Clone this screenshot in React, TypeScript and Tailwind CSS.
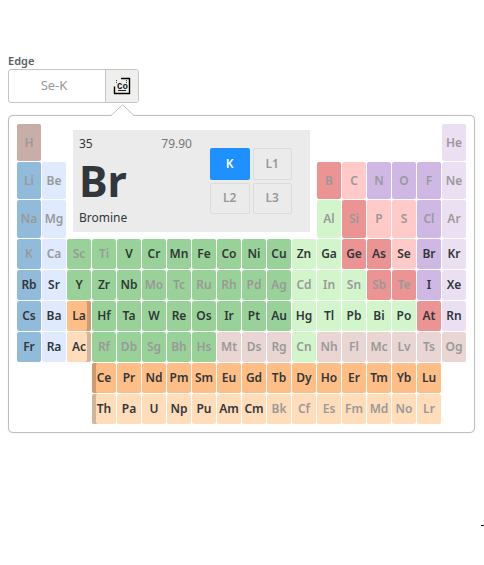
import { useState } from "react";

type Kind =
  | "hydrogen"
  | "alkali"
  | "alkaline"
  | "transition"
  | "post"
  | "metalloid"
  | "nonmetal"
  | "halogen"
  | "noble"
  | "lanthanide"
  | "actinide"
  | "unknown";

const fills: Record<Kind, string> = {
  hydrogen: "bg-[#c9aea7]",
  alkali: "bg-[#91bbda]",
  alkaline: "bg-[#dfeafe]",
  transition: "bg-[#99d298]",
  post: "bg-[#d2f5cb]",
  metalloid: "bg-[#ec9494]",
  nonmetal: "bg-[#ffcac8]",
  halogen: "bg-[#cfb8e4]",
  noble: "bg-[#ebe0f2]",
  lanthanide: "bg-[#ffbe86]",
  actinide: "bg-[#ffdcba]",
  unknown: "bg-[#e9d5d1]",
};

const codes: Record<string, Kind> = {
  h: "hydrogen",
  k: "alkali",
  e: "alkaline",
  t: "transition",
  p: "post",
  m: "metalloid",
  n: "nonmetal",
  x: "halogen",
  g: "noble",
  l: "lanthanide",
  a: "actinide",
  u: "unknown",
};

// Each entry is symbol:category, "*" marks an element without a reachable edge,
// and a leading number skips that many columns.
const rows = [
  "H:h* 16 He:g*",
  "Li:k* Be:e* 10 B:m* C:n* N:x* O:x* F:x* Ne:g*",
  "Na:k* Mg:e* 10 Al:p* Si:m* P:n* S:n* Cl:x* Ar:g*",
  "K:k* Ca:e* Sc:t* Ti:t* V:t Cr:t Mn:t Fe:t Co:t Ni:t Cu:t Zn:p Ga:p Ge:m As:m Se:n Br:x Kr:g",
  "Rb:k Sr:e Y:t Zr:t Nb:t Mo:t* Tc:t* Ru:t* Rh:t* Pd:t* Ag:t* Cd:p* In:p* Sn:p* Sb:m* Te:m* I:x Xe:g",
  "Cs:k Ba:e La:l Hf:t Ta:t W:t Re:t Os:t Ir:t Pt:t Au:t Hg:p Tl:p Pb:p Bi:p Po:p At:m Rn:g",
  "Fr:k Ra:e Ac:a Rf:t* Db:t* Sg:t* Bh:t* Hs:t* Mt:u* Ds:u* Rg:u* Cn:p* Nh:u* Fl:u* Mc:u* Lv:u* Ts:u* Og:u*",
  "3 Ce:l Pr:l Nd:l Pm:l Sm:l Eu:l Gd:l Tb:l Dy:l Ho:l Er:l Tm:l Yb:l Lu:l",
  "3 Th:a Pa:a U:a Np:a Pu:a Am:a Cm:a Bk:a* Cf:a* Es:a* Fm:a* Md:a* No:a* Lr:a*",
];

const elements = rows.flatMap((line, r) => {
  let col = 1;
  return line.split(" ").flatMap((token) => {
    if (/^\d+$/.test(token)) {
      col += Number(token);
      return [];
    }
    const [symbol, code] = token.split(":");
    return [{ symbol, kind: codes[code[0]], disabled: code.endsWith("*"), row: r + 1, col: col++ }];
  });
});

const stripes: Record<string, string> = {
  La: "shadow-[inset_-4px_0_0_#cf9b6e]",
  Ac: "shadow-[inset_-4px_0_0_#d2b499]",
  Ce: "shadow-[inset_4px_0_0_#cf9b6e]",
  Th: "shadow-[inset_4px_0_0_#d2b499]",
};

function TableIcon() {
  return (
    <svg width="18" height="18" viewBox="0 0 18 18" aria-hidden="true">
      <path d="M8 1.5h8.5v15h-15V9.5" fill="none" stroke="#000" strokeWidth="1.4" />
      <path d="M5 13.5h8" stroke="#222" strokeWidth="1.2" />
      <path d="M3 3h1v1H3zM13 3h1v1h-1zM13 5h1v1h-1zM3 5h1v1H3z" fill="#444" />
      <text
        x="4"
        y="12"
        fontSize="9"
        fontWeight="700"
        fill="#111"
        className="font-['Liberation_Mono',monospace]"
      >
        Co
      </text>
    </svg>
  );
}

export default function App() {
  const [edge, setEdge] = useState("K");
  return (
    <main className="px-2 pt-[53px] font-['Noto_Sans','Open_Sans',sans-serif] text-xs text-[#31373a]">
      <label htmlFor="edge" className="block h-4 text-[11px] leading-4 font-semibold text-[#5b6163]">
        Edge
      </label>
      <div className="flex h-[34px] w-[131px] overflow-hidden rounded-[3px] border border-[#c4c4c4]">
        <input
          id="edge"
          readOnly
          placeholder="Se-K"
          className="w-full min-w-0 pr-1.5 text-center text-[13px] outline-none placeholder:text-[#999]"
        />
        <button
          type="button"
          aria-label="Periodic table"
          className="flex w-[33px] shrink-0 items-center justify-center border-l border-[#c4c4c4] bg-[#efefed]"
        >
          <TableIcon />
        </button>
      </div>

      <section className="relative mt-3 w-full max-w-[467px] rounded-[5px] border border-[#bfbfbf] bg-white p-2 shadow-[0_0_1px_#ccc]">
        <svg className="absolute -top-3 left-[102px]" width="23" height="13" viewBox="0 0 23 13" aria-hidden="true">
          <path d="M0 12L11.5 1L23 12V13H0Z" fill="#fff" />
          <path d="M0 11.5L11.5 .8L23 11.5" fill="none" stroke="#bfbfbf" />
        </svg>
        <div className="grid grid-cols-18 grid-rows-[37px_37px_38px_repeat(6,30px)] gap-px">
          <div className="col-span-10 col-start-3 row-span-3 row-start-1 m-1.5 flex bg-[#ebebeb] px-1.5">
            <div className="w-[113px]">
              <div className="flex justify-between pt-1.5 leading-4">
                <span>35</span>
                <span className="text-[#777]">79.90</span>
              </div>
              <div className="text-[43px] leading-[58px] font-bold">Br</div>
              <div className="leading-4">Bromine</div>
            </div>
            <div className="mt-[18px] ml-[18px] grid h-[66px] w-[82px] grid-cols-2 gap-[3px]">
              {["K", "L1", "L2", "L3"].map((name) => (
                <button
                  key={name}
                  type="button"
                  onClick={() => setEdge(name)}
                  className={
                    name === edge
                      ? "rounded-[2px] bg-[#1e90ff] font-semibold text-white"
                      : "rounded-[2px] border border-[#dcdcdc] font-semibold text-[#999]"
                  }
                >
                  {name}
                </button>
              ))}
            </div>
          </div>
          {elements.map((el) => (
            <button
              key={el.symbol}
              type="button"
              disabled={el.disabled}
              style={{ gridRow: el.row, gridColumn: el.col }}
              className={`flex min-w-0 items-center justify-center rounded-[2px] font-semibold ${fills[el.kind]} ${
                el.disabled ? "text-[#999]" : ""
              } ${stripes[el.symbol] ?? ""}`}
            >
              {el.symbol}
            </button>
          ))}
        </div>
      </section>
      <div className="-mr-2 mt-[92px] ml-auto h-px w-[3px] bg-black" />
    </main>
  );
}
